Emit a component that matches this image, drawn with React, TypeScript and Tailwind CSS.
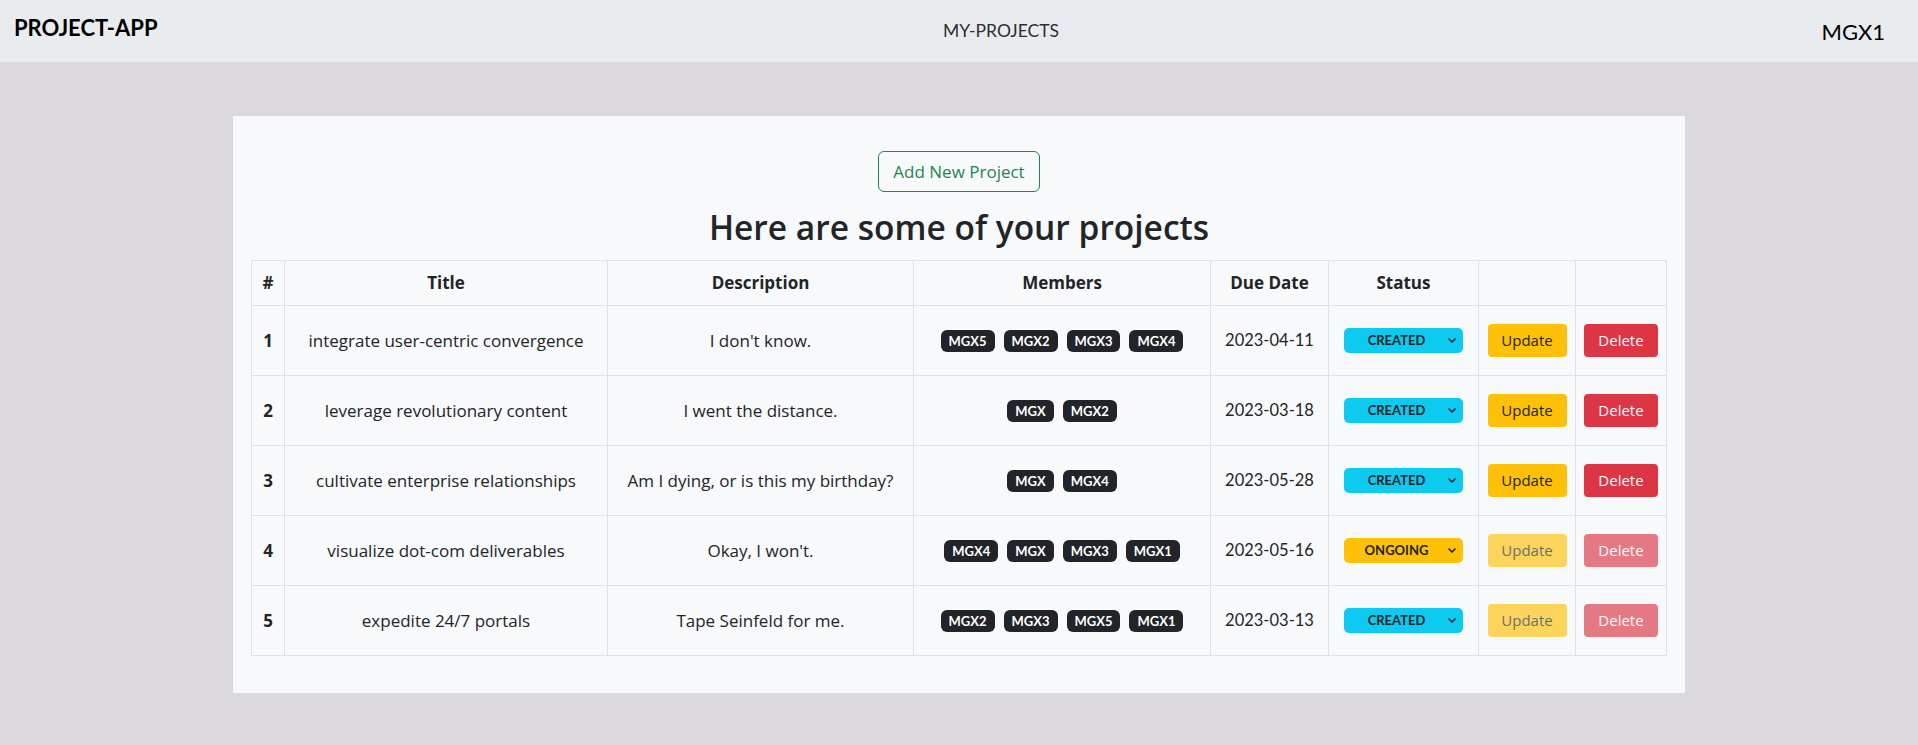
const projects = [
  { id: 1, title: 'integrate user-centric convergence', description: "I don't know.", members: ['MGX5', 'MGX2', 'MGX3', 'MGX4'], due: '2023-04-11', status: 'CREATED', locked: false },
  { id: 2, title: 'leverage revolutionary content', description: 'I went the distance.', members: ['MGX', 'MGX2'], due: '2023-03-18', status: 'CREATED', locked: false },
  { id: 3, title: 'cultivate enterprise relationships', description: 'Am I dying, or is this my birthday?', members: ['MGX', 'MGX4'], due: '2023-05-28', status: 'CREATED', locked: false },
  { id: 4, title: 'visualize dot-com deliverables', description: "Okay, I won't.", members: ['MGX4', 'MGX', 'MGX3', 'MGX1'], due: '2023-05-16', status: 'ONGOING', locked: true },
  { id: 5, title: 'expedite 24/7 portals', description: 'Tape Seinfeld for me.', members: ['MGX2', 'MGX3', 'MGX5', 'MGX1'], due: '2023-03-13', status: 'CREATED', locked: true },
];

const lato = 'font-[Lato,sans-serif]';

function StatusSelect({ status }: { status: string }) {
  const bg = status === 'ONGOING' ? 'bg-[#ffc107]' : 'bg-[#0dcaf0]';
  return (
    <div className={`relative mx-auto flex h-[25px] w-[119px] items-center justify-center rounded-[5px] pl-[4px] pr-[18px] pt-[1px] text-[13px] font-bold text-[#212529] ${lato} ${bg}`}>
      {status}
      <svg className="absolute right-[7px] top-[10px] h-[5px] w-[8px]" viewBox="0 0 8 5" fill="none" stroke="#212529" strokeWidth={1.6} strokeLinecap="round" strokeLinejoin="round">
        <path d="M1 1l3 3 3-3" />
      </svg>
    </div>
  );
}

export default function App() {
  return (
    <div className="min-h-screen bg-[#dbd9dd] text-[#212529]" style={{ fontFamily: '"Open Sans", Lato, sans-serif' }}>
      <header className={`flex h-[62px] items-center justify-between bg-[#e9ecef] pl-[14px] pr-[33px] ${lato}`}>
        <div className="mb-[8px] text-[22px] font-bold text-black">PROJECT-APP</div>
        <div className="ml-[23px] text-[17.5px] text-[#2b2f33]">MY-PROJECTS</div>
        <div className="text-[22px] text-black">MGX1</div>
      </header>

      <main className="pt-[54px]">
        <section className="mx-auto w-[1452px] bg-[#f8f9fa] px-[18px] pt-[35px] pb-[37px]">
          <div className="flex justify-center">
            <button className="h-[41px] rounded-[6px] border border-[#198754] px-[14px] text-[17px] text-[#198754]">
              Add New Project
            </button>
          </div>

          <h2 className="mt-[15px] mb-[13px] text-center text-[33.5px] font-semibold leading-[1.2]">
            Here are some of your projects
          </h2>

          <table className="w-full table-fixed border-collapse text-center text-[17px]">
            <colgroup>
              <col className="w-[33px]" />
              <col className="w-[323px]" />
              <col className="w-[306px]" />
              <col className="w-[297px]" />
              <col className="w-[118px]" />
              <col className="w-[150px]" />
              <col className="w-[97px]" />
              <col className="w-[91px]" />
            </colgroup>
            <thead>
              <tr className="h-[45px] font-bold">
                <th className="border border-[#dee2e6]">#</th>
                <th className="border border-[#dee2e6]">Title</th>
                <th className="border border-[#dee2e6]">Description</th>
                <th className="border border-[#dee2e6]">Members</th>
                <th className="border border-[#dee2e6]">Due Date</th>
                <th className="border border-[#dee2e6]">Status</th>
                <th className="border border-[#dee2e6]"></th>
                <th className="border border-[#dee2e6]"></th>
              </tr>
            </thead>
            <tbody>
              {projects.map((p) => (
                <tr key={p.id} className="h-[70px]">
                  <td className="border border-[#dee2e6] font-bold">{p.id}</td>
                  <td className="border border-[#dee2e6]">{p.title}</td>
                  <td className="border border-[#dee2e6]">{p.description}</td>
                  <td className="border border-[#dee2e6]">
                    <div className={`flex justify-center gap-[9px] ${lato}`}>
                      {p.members.map((m) => (
                        <span key={m} className="rounded-[6px] bg-[#212529] px-[8px] py-[4px] text-[13px] font-bold leading-[14px] text-white">
                          {m}
                        </span>
                      ))}
                    </div>
                  </td>
                  <td className={`border border-[#dee2e6] text-[16.5px] ${lato}`}>{p.due}</td>
                  <td className="border border-[#dee2e6]">
                    <StatusSelect status={p.status} />
                  </td>
                  <td className="border border-[#dee2e6]">
                    <button className={`h-[33px] w-[79px] rounded-[4px] bg-[#ffc107] text-[15px] text-[#212529] ${p.locked ? 'opacity-65' : ''}`}>
                      Update
                    </button>
                  </td>
                  <td className="border border-[#dee2e6]">
                    <button className={`h-[33px] w-[74px] rounded-[4px] bg-[#dc3545] text-[15px] text-white ${p.locked ? 'opacity-65' : ''}`}>
                      Delete
                    </button>
                  </td>
                </tr>
              ))}
            </tbody>
          </table>
        </section>
      </main>
    </div>
  );
}
